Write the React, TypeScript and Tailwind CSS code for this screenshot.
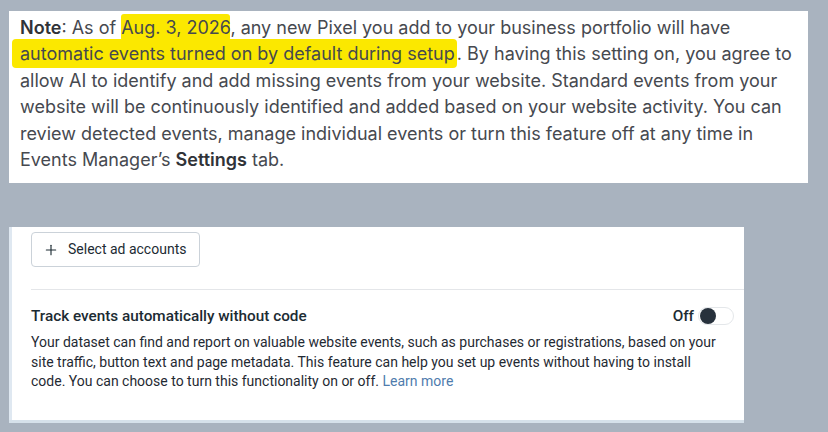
import { Plus } from "lucide-react";

const Mark = ({ children }: { children: React.ReactNode }) => (
  <span className="bg-[#fbe800] py-[3px] rounded-[3px] [box-decoration-break:clone]">{children}</span>
);

const App = () => {
  return (
    <div className="w-[828px] h-[432px] bg-[#a9b3bf] pt-[11px] overflow-hidden font-['Inter',sans-serif]">
      {/* note card */}
      <div className="ml-[9px] w-[799px] h-[172px] bg-white pl-[11px] pt-[4px]">
        <p className="text-[18px] leading-[26.4px] text-[#46494f] whitespace-nowrap">
          <b className="font-semibold text-[#303338]">Note</b>: As of <Mark>Aug. 3, 2026</Mark>, any new Pixel you add to your business portfolio will have
          <br />
          <span className="-ml-[8px] pl-[8px] pr-[2px] bg-[#fbe800] py-[4px] rounded-[4px]">automatic events turned on by default during setup</span>. By having this setting on, you agree to
          <br />
          allow AI to identify and add missing events from your website. Standard events from your
          <br />
          website will be continuously identified and added based on your website activity. You can
          <br />
          review detected events, manage individual events or turn this feature off at any time in
          <br />
          Events Manager’s <b className="font-semibold text-[#303338]">Settings</b> tab.
        </p>
      </div>

      {/* settings card */}
      <div className="mt-[44px] ml-[9px] w-[735px] h-[193px] bg-white border-l-[3px] border-[#dfe8f1] shadow-[0_3px_0_#d6e1ea] pt-[5px] font-['Roboto',sans-serif]">
        <div className="pl-[19px]">
          <button className="flex items-center gap-[9px] h-[35px] w-[169px] pl-[11px] border border-[#cbd2d9] rounded-[4px] text-[14px] text-[#1c2b33] whitespace-nowrap">
            <Plus size={16} strokeWidth={1.7} className="shrink-0" />
            <span>Select ad accounts</span>
          </button>
        </div>
        <div className="ml-[19px] mt-[22px] border-t border-[#e4e6e9]" />
        <div className="pl-[19px] pr-[10px] pt-[16px]">
          <div className="flex items-center justify-between h-[20px]">
            <span className="text-[15.3px] font-medium text-[#1c2b33]">Track events automatically without code</span>
            <div className="flex items-center gap-[4px]">
              <span className="text-[15.3px] font-medium text-[#1c2b33]">Off</span>
              <div className="w-[36px] h-[18px] rounded-full border border-[#e4e7ea] bg-white flex items-center pl-[1px]">
                <div className="w-[16px] h-[16px] rounded-full bg-[#27313c]" />
              </div>
            </div>
          </div>
          <p className="mt-[7px] text-[14px] leading-[19.5px] text-[#1f2a33] whitespace-nowrap">
            Your dataset can find and report on valuable website events, such as purchases or registrations, based on your
            <br />
            site traffic, button text and page metadata. This feature can help you set up events without having to install
            <br />
            code. You can choose to turn this functionality on or off. <span className="text-[#4f7cad]">Learn more</span>
          </p>
        </div>
      </div>
    </div>
  );
};

export default App;
